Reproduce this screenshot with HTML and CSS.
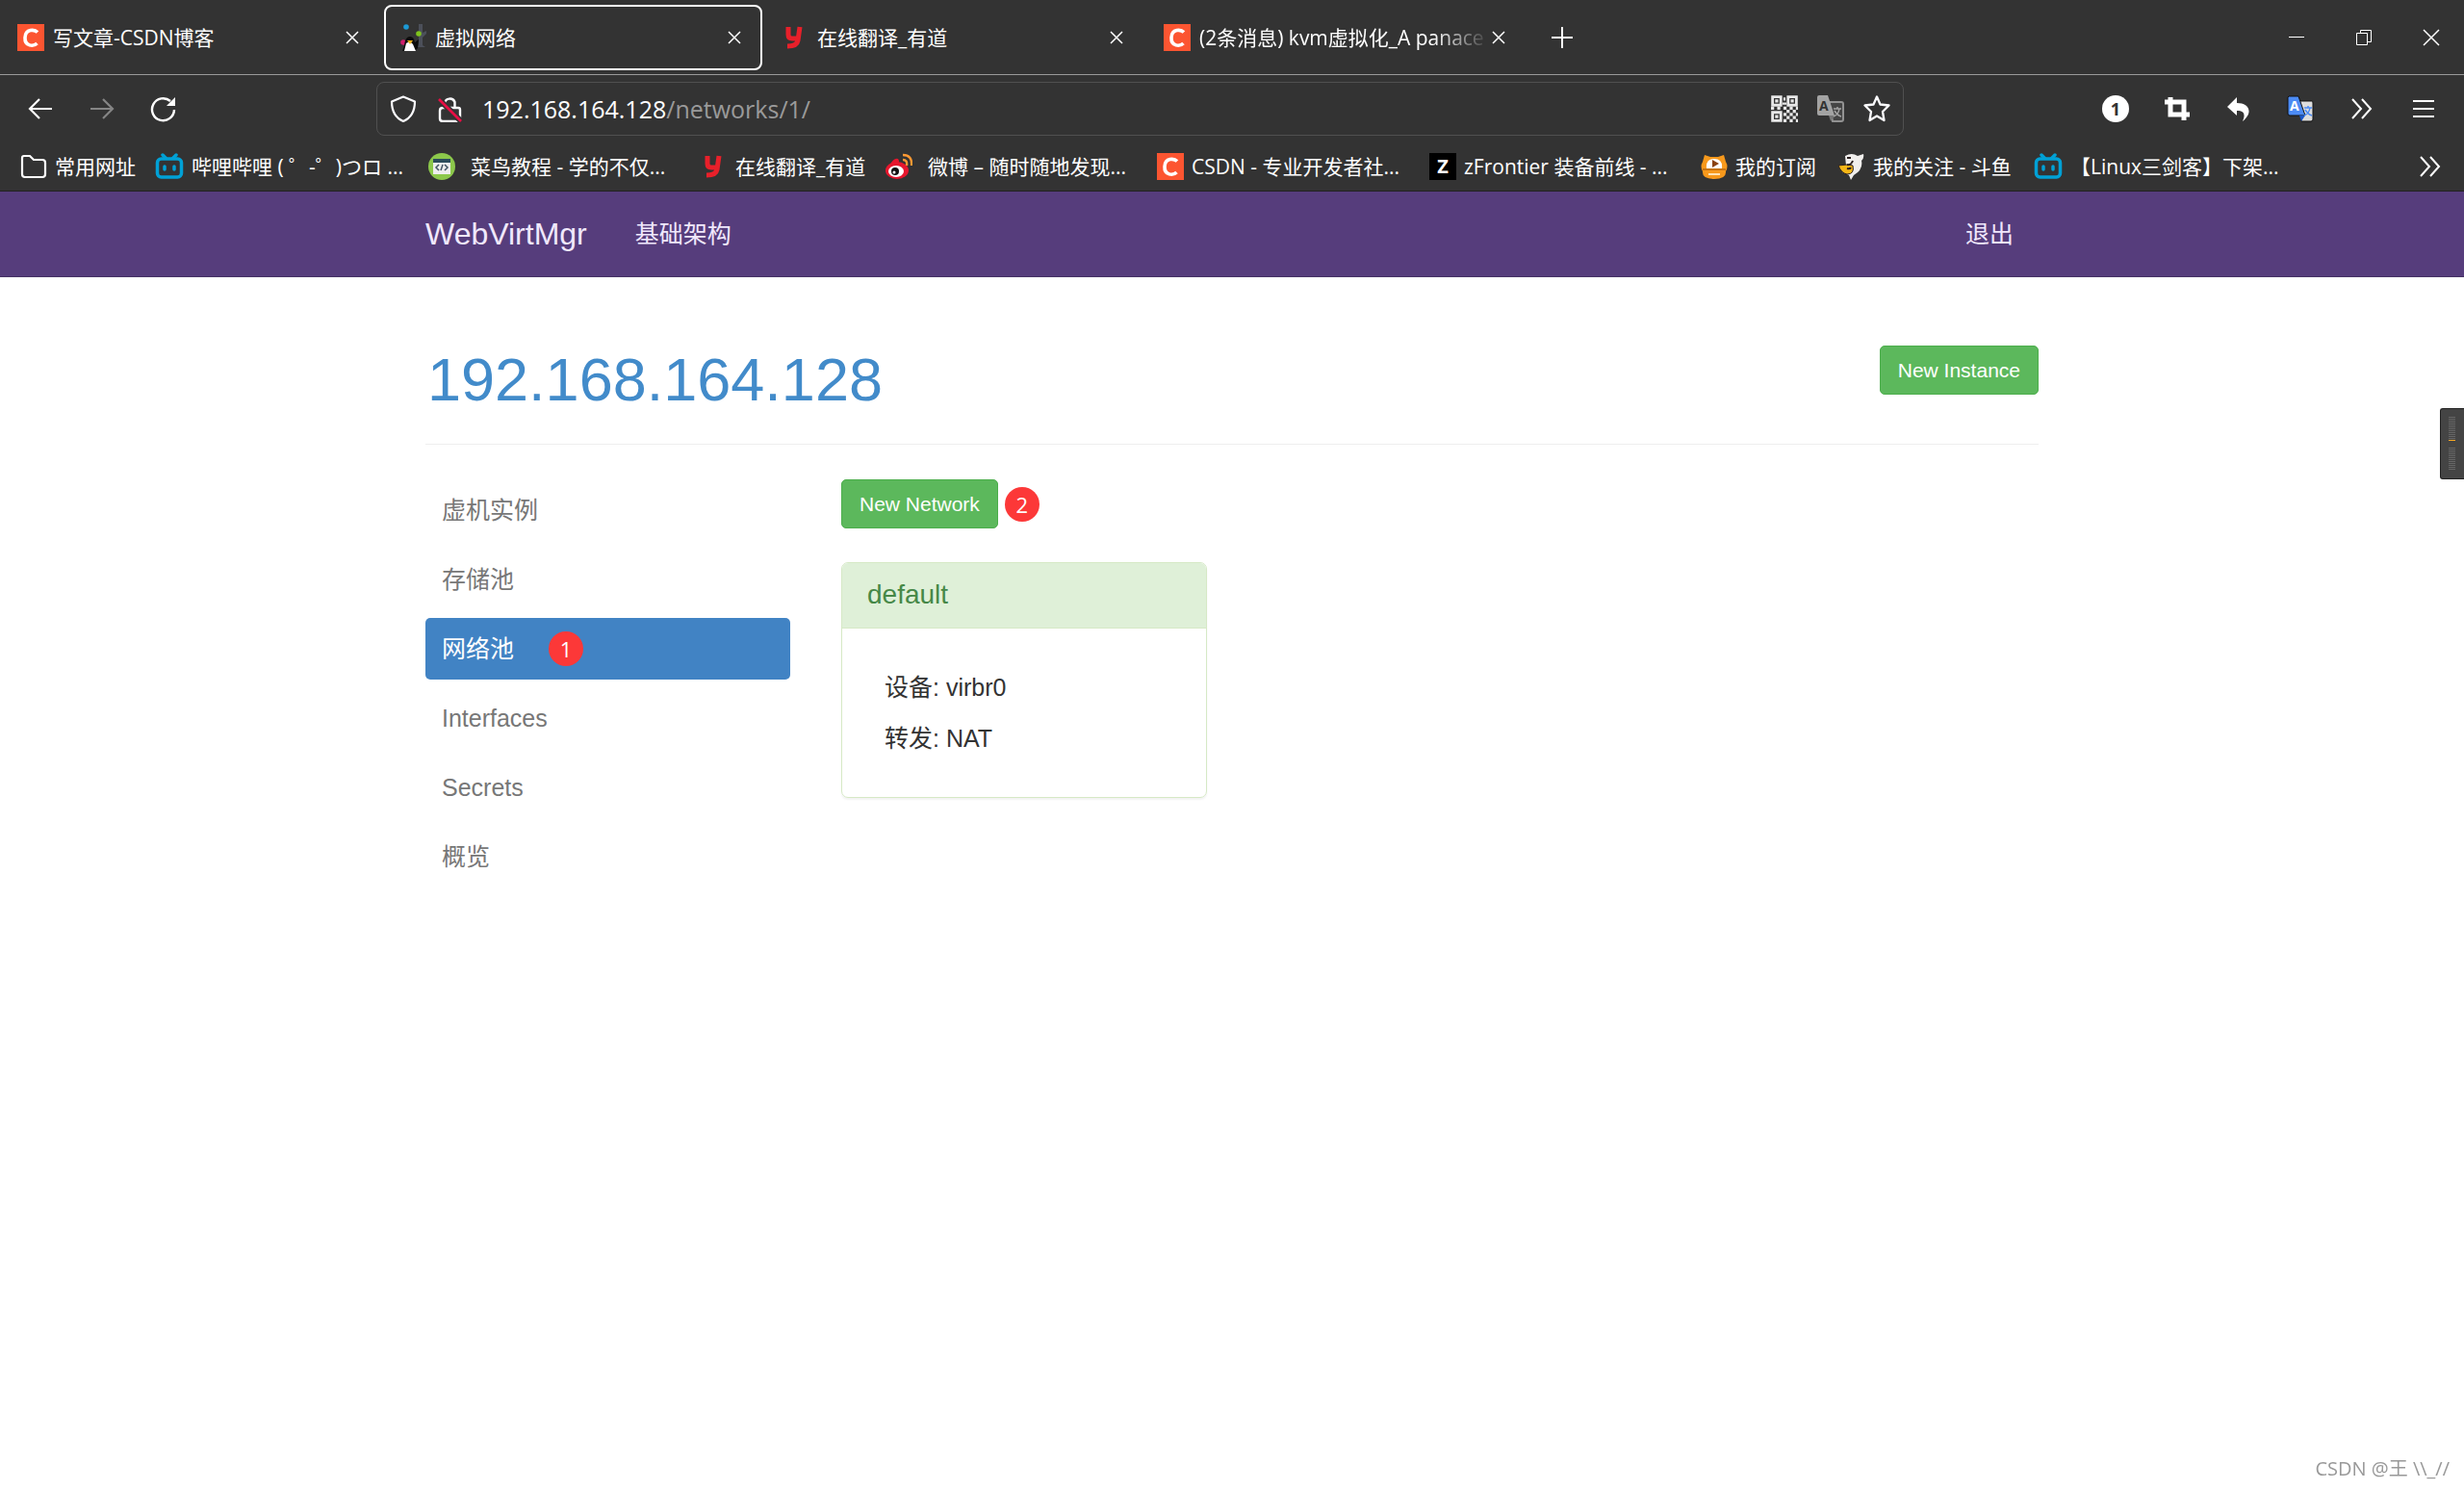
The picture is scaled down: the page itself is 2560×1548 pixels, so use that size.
FILE: index.html
```html
<!DOCTYPE html>
<html lang="zh-CN">
<head>
<meta charset="utf-8">
<title>虚拟网络</title>
<link rel="stylesheet" href="styles.css">
</head>
<body>
<svg class="defs" aria-hidden="true">
  <symbol id="csdn" viewBox="0 0 28 28"><rect width="28" height="28" fill="#fc5531"/><path d="M21 8.500C18 5.500 8.500 4.500 8 14C7.500 23.500 17 23.500 20.500 20" fill="none" stroke="#fff" stroke-width="3.600"/></symbol>
  <symbol id="youdao" viewBox="0 0 28 28"><path d="M7 3V11Q7 15 11 15H16M19 3L17 17Q16 23 6 23" fill="none" stroke="#e8202a" stroke-width="5"/></symbol>
  <symbol id="bili" viewBox="0 0 30 28"><g fill="none" stroke="#00a1d6" stroke-width="3.500" stroke-linecap="round"><rect x="2.500" y="6" width="25" height="19" rx="4"/><path d="M8 2L11 5M22 2L19 5"/></g><path d="M10 14V17M20 14V17" stroke="#00a1d6" stroke-width="3.500" stroke-linecap="round"/></symbol>
  <symbol id="close" viewBox="0 0 14 14"><path d="M1 1L13 13M13 1L1 13" fill="none" stroke="currentColor" stroke-width="1.500"/></symbol>
  <symbol id="more" viewBox="0 0 28 28"><path d="M4 4L13 14L4 24M14 4L23 14L14 24" fill="none" stroke="currentColor" stroke-width="2"/></symbol>
</svg>

<header class="browser">
  <div class="tabbar">
    <div class="tab"><svg class="icon"><use href="#csdn"/></svg><span class="tab-title">写文章-CSDN博客</span><button class="tab-close" aria-label="关闭"><svg><use href="#close"/></svg></button></div>
    <div class="tab tab-active"><svg class="icon" viewBox="0 0 28 28"><path d="M20 0H24V9L28 7V10L24 14V22L27 24H19L20 20Z" fill="#4c505a"/><circle cx="7" cy="3" r="2.800" fill="#1c9ad6"/><circle cx="20" cy="10" r="2.800" fill="#7fc41c"/><circle cx="4" cy="19" r="2.800" fill="#d0206c"/><path d="M5 22Q6 13 11 13Q15 13 16 19L20 16L19 25L16 28H3Z" fill="#0c0c0c"/><path d="M7 20Q11 17 14 21L17 28H5Z" fill="#fff"/><path d="M8 17H14L11 21Z" fill="#f4b41a"/></svg><span class="tab-title">虚拟网络</span><button class="tab-close" aria-label="关闭"><svg><use href="#close"/></svg></button></div>
    <div class="tab"><svg class="icon"><use href="#youdao"/></svg><span class="tab-title">在线翻译_有道</span><button class="tab-close" aria-label="关闭"><svg><use href="#close"/></svg></button></div>
    <div class="tab"><svg class="icon"><use href="#csdn"/></svg><span class="tab-title tab-fade">(2条消息) kvm虚拟化_A panace</span><button class="tab-close" aria-label="关闭"><svg><use href="#close"/></svg></button></div>
    <button class="new-tab" aria-label="新标签页"><svg viewBox="0 0 22 22"><path d="M11 0V22M0 11H22" stroke="#fff" stroke-width="2"/></svg></button>
    <div class="window-buttons">
      <button aria-label="最小化"><svg viewBox="0 0 18 18"><path d="M1 8.500H17" stroke="#fff"/></svg></button>
      <button aria-label="还原"><svg viewBox="0 0 18 18"><path d="M1.500 4.500H12.500V16.500H1.500ZM5.500 4V1.500H16.500V13.500H13" fill="none" stroke="#fff"/></svg></button>
      <button aria-label="关闭窗口"><svg viewBox="0 0 18 18"><path d="M1 1L17 17M17 1L1 17" stroke="#fff" stroke-width="1.500"/></svg></button>
    </div>
  </div>

  <div class="toolbar">
    <div class="nav-buttons">
      <button aria-label="后退"><svg viewBox="0 0 28 28"><path d="M26 14H3M13 4L3 14L13 24" fill="none" stroke="#fff" stroke-width="2.200"/></svg></button>
      <button aria-label="前进"><svg viewBox="0 0 28 28"><path d="M2 14H25M15 4L25 14L15 24" fill="none" stroke="#858585" stroke-width="2.200"/></svg></button>
      <button aria-label="刷新"><svg viewBox="0 0 28 28"><path d="M25 15A11.500 11.500 0 1 1 21 6" fill="none" stroke="#fff" stroke-width="2.400"/><path d="M26 2V11H17Z" fill="#fff"/></svg></button>
    </div>
    <div class="urlbar">
      <svg class="icon" viewBox="0 0 28 28"><path d="M14 1.500L26 6.500C26 15 23 23 14 27C5 23 2 15 2 6.500Z" fill="none" stroke="#fbfbfe" stroke-width="2.200" stroke-linejoin="round"/></svg>
      <svg class="icon" viewBox="0 0 28 28"><path d="M9 8A5.500 5.500 0 0 1 19.500 7V13M7 13H23Q25 13 25 15V24Q25 27 22 27H7Q4 27 4 24V16Q4 13 7 13Z" fill="none" stroke="#fbfbfe" stroke-width="2.400"/><path d="M3 4L26 27" stroke="#333" stroke-width="6"/><path d="M3 4L26 27" stroke="#e80e44" stroke-width="2.600"/></svg>
      <p class="url"><span class="url-host">192.168.164.128</span>/networks/1/</p>
      <svg class="icon" viewBox="0 0 26 26"><path d="M1.500 1.500H9.500V9.500H1.500ZM16.500 1.500H24.500V9.500H16.500ZM1.500 16.500H9.500V24.500H1.500Z" fill="none" stroke="#e8e8e8" stroke-width="2.600"/><path d="M4 4H7V7H4ZM19 4H22V7H19ZM4 19H7V22H4ZM12 2H14V5H12ZM11 7H15V9H11ZM0 11H3V14H0ZM6 11H9V14H6ZM12 11H15V14H12ZM18 11H21V14H18ZM24 11H26V14H24ZM12 17H15V20H12ZM15 14H18V17H15ZM18 17H21V20H18ZM21 14H24V17H21ZM15 20H18V23H15ZM21 20H24V23H21ZM12 23H15V26H12ZM18 23H21V26H18ZM24 23H26V26H24ZM24 17H26V20H24Z" fill="#e8e8e8"/></svg>
      <svg class="icon" viewBox="0 0 28 28"><path d="M12 7H25Q27 7 27 9V25Q27 27 25 27H16Z" fill="#444" stroke="#929292" stroke-width="2"/><path d="M2 0H11L18 21H2Q0 21 0 19V2Q0 0 2 0Z" fill="#a3a3a3"/><path d="M12 21H18L14 27Z" fill="#777"/><text x="2" y="16" class="glyph" font-size="14" fill="#333">A</text><path d="M17 14H25M21 12V14M23 14Q22 20 17 22M18 16Q21 21 25 22" stroke="#a3a3a3" stroke-width="1.500" fill="none"/></svg>
      <svg class="icon" viewBox="0 0 28 28"><path d="M14 1.500L17.500 9.500L26.500 10.500L20 17L21.500 26L14 21.500L6.500 26L8 17L1.500 10.500L10.500 9.500Z" fill="none" stroke="#fbfbfe" stroke-width="2.300" stroke-linejoin="round"/></svg>
    </div>
    <div class="extensions">
      <button class="ext-badge">1</button>
      <button aria-label="截图"><svg viewBox="0 0 28 28"><path d="M7 2V20H27M1 7H21V26" fill="none" stroke="#fff" stroke-width="5"/></svg></button>
      <button aria-label="撤销"><svg viewBox="0 0 28 28"><path d="M12 2V8C24 8 30 17 18 27C21 20 20 16 12 16V21L2 12Z" fill="#fff"/></svg></button>
      <button aria-label="翻译"><svg viewBox="0 0 28 28"><path d="M12 6H26Q27 6 27 8V25Q27 27 25 27H15Z" fill="#ddd" stroke="#111"/><path d="M2 1H12L19 21H3Q1 21 1 19V2Z" fill="#4c8bf5" stroke="#111"/><path d="M13 21H19L15 27Z" fill="#1a57c8"/><text x="3" y="16" class="glyph" font-size="14" fill="#fff">A</text><path d="M18 13H26M22 11V13M24 13Q23 19 18 21M19 15Q22 20 26 21" stroke="#4c8bf5" stroke-width="1.500" fill="none"/></svg></button>
      <button aria-label="更多工具"><svg><use href="#more"/></svg></button>
      <button aria-label="菜单"><svg viewBox="0 0 28 28"><path d="M3 6H25M3 14H25M3 22H25" stroke="#fff" stroke-width="2"/></svg></button>
    </div>
  </div>

  <nav class="bookmarks">
    <a href="#"><svg class="icon" viewBox="0 0 28 28"><path d="M4 3H10L14 7H23Q26 7 26 10V22Q26 25 23 25H5Q2 25 2 22V5Q2 3 4 3Z" fill="none" stroke="#fff" stroke-width="2.200"/></svg>常用网址</a>
    <a href="#"><svg class="icon icon-wide"><use href="#bili"/></svg>哔哩哔哩 ( ゜-゜)つロ ...</a>
    <a href="#" class="spaced"><svg class="icon" viewBox="0 0 28 28"><circle cx="14" cy="14" r="14" fill="#8cc84b"/><rect x="5" y="6" width="18" height="16" fill="#eee"/><path d="M5 6H23V10H5Z" fill="#2c4c5c"/><path d="M11 12L8 15L11 18M17 12L20 15L17 18M15 12L13 18" fill="none" stroke="#456" stroke-width="1.500"/></svg>菜鸟教程 - 学的不仅...</a>
    <a href="#"><svg class="icon"><use href="#youdao"/></svg>在线翻译_有道</a>
    <a href="#" class="spaced"><svg class="icon" viewBox="0 0 28 28"><ellipse cx="12" cy="18" rx="12" ry="9" fill="#e6162d"/><path d="M4 13Q9 4 13 6Q15 8 13 12" fill="#e6162d"/><ellipse cx="11" cy="19" rx="8" ry="6" fill="#fff"/><circle cx="10" cy="19" r="4" fill="#111"/><circle cx="9" cy="20" r="1.500" fill="#fff"/><path d="M18 7Q23 7 22 13M18 2Q28 2 27 13" fill="none" stroke="#ff9933" stroke-width="2.400"/></svg>微博 – 随时随地发现...</a>
    <a href="#"><svg class="icon"><use href="#csdn"/></svg>CSDN - 专业开发者社...</a>
    <a href="#"><svg class="icon" viewBox="0 0 28 28"><rect width="28" height="28" fill="#000"/><text x="14" y="21" class="glyph" font-size="20" text-anchor="middle" fill="#fff">Z</text></svg>zFrontier 装备前线 - ...</a>
    <a href="#"><svg class="icon" viewBox="0 0 28 28"><path d="M4 2L10 4H18L24 2L26 9Q29 14 26 19Q27 27 14 27Q1 27 2 19Q-1 14 2 9Z" fill="#f7991c"/><path d="M6 16Q5 6 14 6Q23 6 22 16Z" fill="#fff"/><path d="M12 7L19 11L12 15Z" fill="#8a4212"/><path d="M2 17H26" stroke="#b96a10" stroke-width="1.500"/><path d="M8 21H20V23H8Z" fill="#ffe3b5"/></svg>我的订阅</a>
    <a href="#"><svg class="icon" viewBox="0 0 28 28"><path d="M7 3Q14 -1 20 3L26 1Q27 5 24 8Q26 17 16 23L13 28L11 23L4 20L8 13Z" fill="#f1efed"/><path d="M0 13L9 12L15 13Q17 22 9 22Q3 21 0 13Z" fill="#f5b616" stroke="#2b2020"/><path d="M9 12Q13 13 15 8M9 16Q12 17 13 15M9 5L13 5" stroke="#2b2020" stroke-width="2" fill="none"/></svg>我的关注 - 斗鱼</a>
    <a href="#"><svg class="icon icon-wide"><use href="#bili"/></svg>【Linux三剑客】下架...</a>
    <button class="bookmarks-more" aria-label="更多书签"><svg class="icon"><use href="#more"/></svg></button>
  </nav>
</header>

<nav class="navbar">
  <div class="container navbar-row">
    <a class="brand" href="#">WebVirtMgr</a>
    <a href="#">基础架构</a>
    <a class="logout" href="#">退出</a>
  </div>
</nav>

<main class="container">
  <div class="page-header">
    <h1><a href="#">192.168.164.128</a></h1>
    <button class="btn">New Instance</button>
  </div>
  <div class="layout">
    <nav class="sidebar">
      <a href="#">虚机实例</a>
      <a href="#">存储池</a>
      <a href="#" class="active">网络池<span class="marker">1</span></a>
      <a href="#">Interfaces</a>
      <a href="#">Secrets</a>
      <a href="#">概览</a>
    </nav>
    <section>
      <div class="actions"><button class="btn">New Network</button><span class="marker">2</span></div>
      <article class="panel">
        <h3><a href="#">default</a></h3>
        <div class="panel-body">
          <p>设备: virbr0</p>
          <p>转发: NAT</p>
        </div>
      </article>
    </section>
  </div>
</main>

<aside class="meter" aria-hidden="true"><div class="bars"></div><div class="bars-peak"></div><div class="bars bars-low"></div></aside>
<p class="watermark">CSDN @王 \\_//</p>
</body>
</html>
```

FILE: styles.css
```css
* { box-sizing: border-box; }

body {
  margin: 0;
  background: #fff;
  color: #333;
  font: 25px/36px "Liberation Sans", "Noto Sans CJK SC", sans-serif;
}

a { color: inherit; text-decoration: none; }
p, h1, h3 { margin: 0; font-weight: 400; }
button { padding: 0; border: 0; background: none; color: inherit; font: inherit; }
svg { display: block; flex: none; }
.defs { position: absolute; width: 0; height: 0; }
.glyph { font-family: "Open Sans", sans-serif; font-weight: 700; }

/* Browser chrome */
.browser {
  background: #333;
  border-bottom: 1px solid #222;
  color: #fff;
  font: 21px/28px "Open Sans", "Noto Sans CJK SC", sans-serif;
}
.icon { width: 28px; height: 28px; }
.icon-wide { width: 30px; }

.tabbar {
  display: flex;
  align-items: center;
  gap: 4px;
  height: 78px;
  padding: 0 2px;
  border-bottom: 1px solid #9a9a9a;
}
.tab {
  display: flex;
  align-items: center;
  gap: 9px;
  width: 393px;
  height: 68px;
  padding: 0 20px 0 14px;
  border: 2px solid transparent;
  border-radius: 8px;
}
.tab-active { border-color: #fff; }
.tab-title { flex: 1; white-space: nowrap; }
.tab-fade { margin-right: -8px; mask-image: linear-gradient(to right, #000 80%, transparent); }
.tab-close svg { width: 14px; height: 14px; }
.new-tab { margin-left: 22px; }
.new-tab svg { width: 22px; height: 22px; }
.window-buttons { display: flex; gap: 52px; margin-left: auto; padding-right: 23px; }
.window-buttons svg { width: 18px; height: 18px; }

.toolbar { display: flex; align-items: center; height: 70px; padding: 0 28px; }
.nav-buttons { display: flex; gap: 36px; width: 363px; }
.nav-buttons svg, .extensions svg { width: 28px; height: 28px; }
.urlbar {
  display: flex;
  flex: 1;
  align-items: center;
  gap: 20px;
  height: 56px;
  padding: 0 13px;
  border: 1px solid #505050;
  border-radius: 8px;
}
.url { flex: 1; color: #9a9a9a; font-size: 25px; }
.url-host { color: #fff; }
.extensions { display: flex; gap: 36px; margin-left: 206px; }
.ext-badge {
  width: 28px;
  height: 28px;
  border-radius: 50%;
  background: #fff;
  color: #333;
  font-size: 18px;
  font-weight: 700;
}

.bookmarks {
  display: grid;
  grid-template-columns: 140px 284px 283px 192px 282px 283px 282px 143px 203px 1fr auto;
  align-items: center;
  height: 50px;
  padding: 0 21px;
  white-space: nowrap;
}
.bookmarks a { display: flex; align-items: center; gap: 8px; }
.bookmarks .spaced { gap: 16px; }

/* Site */
.container { width: 1676px; max-width: 100%; margin: 0 auto; }
.navbar { background: #563d7c; border-bottom: 1px solid #463265; color: #f0e8fc; }
.navbar-row { display: flex; align-items: center; gap: 50px; height: 88px; }
.brand { font-size: 32px; }
.logout { margin-left: auto; padding-right: 26px; }

.page-header {
  display: flex;
  align-items: flex-start;
  justify-content: space-between;
  padding-top: 71px;
  padding-bottom: 32px;
  border-bottom: 1px solid #eee;
}
h1 { padding-left: 2px; font-size: 63px; line-height: 70px; color: #428bca; }
.btn {
  height: 51px;
  padding: 0 18px;
  border: 1px solid #4cae4c;
  border-radius: 5px;
  background: #5cb85c;
  color: #fff;
  font-size: 21px;
}

.layout { display: grid; grid-template-columns: 379px 1fr; gap: 53px; padding-top: 36px; }
.sidebar { display: flex; flex-direction: column; gap: 8px; color: #777; }
.sidebar a { display: flex; align-items: center; height: 64px; padding: 0 17px; border-radius: 5px; }
.sidebar .active { gap: 36px; background: #4183c4; color: #fff; }
.marker {
  display: grid;
  place-items: center;
  width: 36px;
  height: 36px;
  border-radius: 50%;
  background: #fc3838;
  color: #fff;
  font: 22px/30px "Open Sans", sans-serif;
}

.actions { display: flex; align-items: center; gap: 7px; }
.panel {
  width: 380px;
  margin-top: 35px;
  border: 1px solid #d6e9c6;
  border-radius: 7px;
  box-shadow: 0 2px 2px #0000000d;
}
.panel h3 {
  padding: 15px 26px 16px;
  border-bottom: 1px solid #d6e9c6;
  border-radius: 6px 6px 0 0;
  background: #dff0d8;
  color: #468847;
  font-size: 28px;
}
.panel-body { display: grid; gap: 17px; padding: 43px 44px; }

.meter {
  position: fixed;
  top: 424px;
  right: 0;
  width: 25px;
  height: 74px;
  padding: 8px;
  border: 1px solid #222;
  border-right: 0;
  border-radius: 3px 0 0 3px;
  background: #444;
}
.bars { width: 7px; height: 24px; background: repeating-linear-gradient(#666 0 1px, #444 1px 2px); }
.bars-peak { width: 7px; height: 1px; background: #f5a623; }
.bars-low { margin-top: 7px; }

.watermark {
  position: fixed;
  right: 15px;
  bottom: 8px;
  color: #999;
  font: 20px/28px "Open Sans", "Noto Sans CJK SC", sans-serif;
}
```
